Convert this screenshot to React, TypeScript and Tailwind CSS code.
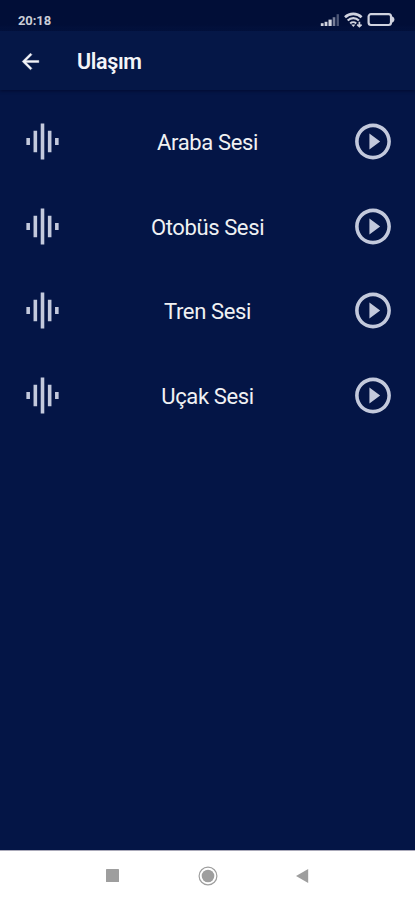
const sounds = ["Araba Sesi", "Otobüs Sesi", "Tren Sesi", "Uçak Sesi"];

const StatusBar = () => {
  return (
    <div className="flex h-[31px] items-center justify-between bg-gradient-to-b from-[#010e37] from-80% to-[#03123f] pt-[8px] pr-[20px] pl-[18px]">
      <span className="pt-[1px] text-[13px] leading-none font-bold tracking-[-0.1px] text-[#c9ccd6]">20:18</span>
      <div className="flex items-center">
        <svg width="20" height="14" viewBox="0 0 20 14" className="mr-[4px]">
          <path d="M.8 10.2h2.8V13H.8z" fill="#d0d3df" />
          <path d="M4.6 8.8h2.8V13H4.6z" fill="#d0d3df" />
          <path d="M8.5 6.6h3.2V13H8.5z" fill="#d0d3df" />
          <path d="M12.7 4.2h2.6V13h-2.6z" fill="#767e98" />
          <path d="M16.6 1.2h2.3V13h-2.3z" fill="#4d5777" />
        </svg>
        <svg width="19" height="16" viewBox="0 0 19 16" fill="none" stroke="#d0d3df" className="mr-[4px]">
          <path d="M1 5.2a12 12 0 0 1 16.6 0" strokeWidth="2.6" />
          <path d="M3.7 8.5a8 8 0 0 1 11.2 0" strokeWidth="2.2" />
          <path d="M6.2 11.4a4.4 4.4 0 0 1 6 0" strokeWidth="2" />
          <path d="M9.4 15l-2.2-2.4h4.2z" fill="#d0d3df" stroke="none" />
          <path d="M15.4 9.8v4.6M13.2 12.6l2.2 2 2.2-2" strokeWidth="1.7" />
        </svg>
        <svg width="28" height="14" viewBox="0 0 28 14">
          <rect x="1.6" y="1.2" width="22.4" height="10.8" rx="2.4" fill="none" stroke="#d0d3df" strokeWidth="2.2" />
          <path d="M24.6 3.2c2 .6 2.8 1.8 2.8 3.4s-.8 2.8-2.8 3.4z" fill="#d0d3df" />
        </svg>
      </div>
    </div>
  );
};

const Header = () => {
  return (
    <header className="flex h-[59px] items-center bg-[#051747] pt-[1px] pl-[18px] shadow-[0_1px_3px_rgba(0,4,30,0.55)]">
      <svg width="25" height="25" viewBox="0 0 24 24" fill="#f3f4f8" stroke="#f3f4f8" strokeWidth=".4">
        <path d="M20 11H7.83l5.59-5.59L12 4l-8 8 8 8 1.41-1.41L7.83 13H20v-2z" />
      </svg>
      <h1 className="ml-[34px] pt-[2px] text-[21.5px] leading-none font-semibold tracking-[-0.35px] text-[#f3f4f8]">Ulaşım</h1>
    </header>
  );
};

const SoundRow = ({ title }: { title: string }) => {
  return (
    <li className="flex h-[84.6px] items-center justify-between pr-[20px] pl-[21px]">
      <svg width="43" height="43" viewBox="0 0 24 24" fill="#c3c9dc">
        <path d="M7 18h2V6H7v12zm4 4h2V2h-2v20zm-8-8h2v-4H3v4zm12 4h2V6h-2v12zm4-8v4h2v-4h-2z" />
      </svg>
      <span className="pt-[3px] text-[22px] leading-none tracking-[-0.38px] text-[#f0f1f3]">{title}</span>
      <svg width="44" height="43" viewBox="0 0 24 24" fill="#c3c9dc">
        <path d="M10 16.5l6-4.5-6-4.5v9zM12 2C6.48 2 2 6.48 2 12s4.48 10 10 10 10-4.48 10-10S17.52 2 12 2zm0 18c-4.41 0-8-3.59-8-8s3.59-8 8-8 8 3.59 8 8-3.59 8-8 8z" />
      </svg>
    </li>
  );
};

const NavigationBar = () => {
  return (
    <nav className="flex h-[50px] items-center border-t border-[#aaa9b9] bg-white pl-[105px]">
      <svg width="15" height="15" viewBox="0 0 15 15" fill="#9e9e9e">
        <rect x="1" y="1" width="13" height="13" rx=".6" />
      </svg>
      <svg width="20" height="20" viewBox="0 0 20 20" className="ml-[78px]">
        <circle cx="10" cy="10" r="8.9" fill="none" stroke="#9e9e9e" strokeWidth="1.2" />
        <circle cx="10" cy="10" r="6.3" fill="#9e9e9e" />
      </svg>
      <svg width="14" height="16" viewBox="0 0 14 16" fill="#9e9e9e" className="ml-[77px]">
        <path d="M13.2 1v14L1 8z" />
      </svg>
    </nav>
  );
};

export default function App() {
  return (
    <div className="flex h-screen w-full flex-col overflow-hidden bg-[#041546] font-['Roboto',sans-serif]">
      <StatusBar />
      <Header />
      <ul className="flex-1 pt-[9.3px]">
        {sounds.map((title) => (
          <SoundRow key={title} title={title} />
        ))}
      </ul>
      <NavigationBar />
    </div>
  );
}
